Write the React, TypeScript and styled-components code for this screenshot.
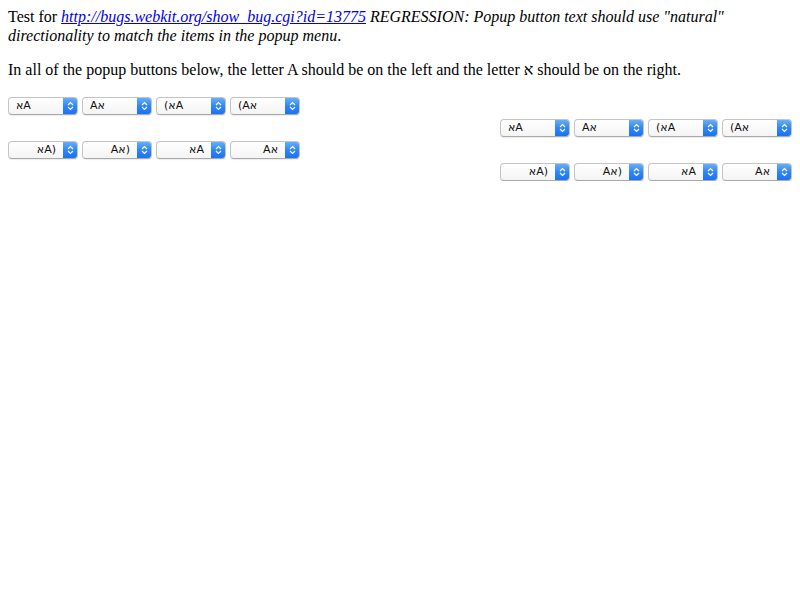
import React from 'react';
import styled, { createGlobalStyle } from 'styled-components';

const GlobalStyle = createGlobalStyle`
  body {
    margin: 8px;
    background: #ffffff;
    font-family: "Liberation Serif", "DejaVu Serif", serif;
    font-size: 16px;
    color: #000000;
  }
`;

const Para = styled.p`
  margin: 16px 0;
  line-height: 18.5px;
  &:first-child {
    margin-top: 0;
  }
`;

const Link = styled.a`
  color: #0000ee;
  text-decoration: underline;
  font-style: italic;
`;

const Note = styled.em`
  font-style: italic;
`;

const Rows = styled.div`
  display: flex;
  flex-direction: column;
  gap: 4px;
  padding-top: 1px;
`;

const Row = styled.div<{ right?: boolean }>`
  display: flex;
  justify-content: ${({ right }) => (right ? 'flex-end' : 'flex-start')};
  gap: 4px;
`;

const Popup = styled.div`
  display: flex;
  width: 70px;
  height: 18px;
  box-sizing: border-box;
  border: 1px solid #c4c4c4;
  border-bottom-color: #a9a9a9;
  border-radius: 4px;
  background: linear-gradient(#ffffff, #f4f4f4);
  box-shadow: 0 1px 1px rgba(0, 0, 0, 0.08);
  overflow: hidden;
  font-family: "DejaVu Sans", "Liberation Sans", sans-serif;
  font-size: 11px;
  color: #111;
`;

const Label = styled.div<{ alignEnd?: boolean }>`
  flex: 1;
  display: flex;
  align-items: center;
  justify-content: ${({ alignEnd }) => (alignEnd ? 'flex-end' : 'flex-start')};
  padding: ${({ alignEnd }) => (alignEnd ? '0 7px 0 0' : '0 0 0 7px')};
  white-space: nowrap;
`;

const Stepper = styled.div`
  width: 15px;
  display: flex;
  align-items: center;
  justify-content: center;
  background: linear-gradient(#6cb3fa, #2f86f6 50%, #1a6ff0);
  margin: -1px -1px -1px 0;
`;

const Arrows = () => (
  <svg width="7" height="10" viewBox="0 0 7 10">
    <path d="M1 4 L3.5 1.5 L6 4 M1 6 L3.5 8.5 L6 6" fill="none" stroke="#fff" strokeWidth="1.2" />
  </svg>
);

const Button = ({ text, alignEnd }: { text: string; alignEnd?: boolean }) => (
  <Popup>
    <Label alignEnd={alignEnd}>
      <bdo dir="ltr">{text}</bdo>
    </Label>
    <Stepper>
      <Arrows />
    </Stepper>
  </Popup>
);

const topTexts = ['\u05D0A', 'A\u05D0', '(\u05D0A', '(A\u05D0'];
const bottomTexts = ['\u05D0A)', 'A\u05D0)', '\u05D0A', 'A\u05D0'];

export default function App() {
  return (
    <>
      <GlobalStyle />
      <Para>
        Test for <Link href="#">http://bugs.webkit.org/show_bug.cgi?id=13775</Link>{' '}
        <Note>REGRESSION: Popup button text should use "natural" directionality to match the items in the popup menu</Note>.
      </Para>
      <Para>
        In all of the popup buttons below, the letter A should be on the left and the letter {'\u05D0'} should be on the right.
      </Para>
      <Rows>
        <Row>
          {topTexts.map((t, i) => (
            <Button key={i} text={t} />
          ))}
        </Row>
        <Row right>
          {topTexts.map((t, i) => (
            <Button key={i} text={t} />
          ))}
        </Row>
        <Row>
          {bottomTexts.map((t, i) => (
            <Button key={i} text={t} alignEnd />
          ))}
        </Row>
        <Row right>
          {bottomTexts.map((t, i) => (
            <Button key={i} text={t} alignEnd />
          ))}
        </Row>
      </Rows>
    </>
  );
}
